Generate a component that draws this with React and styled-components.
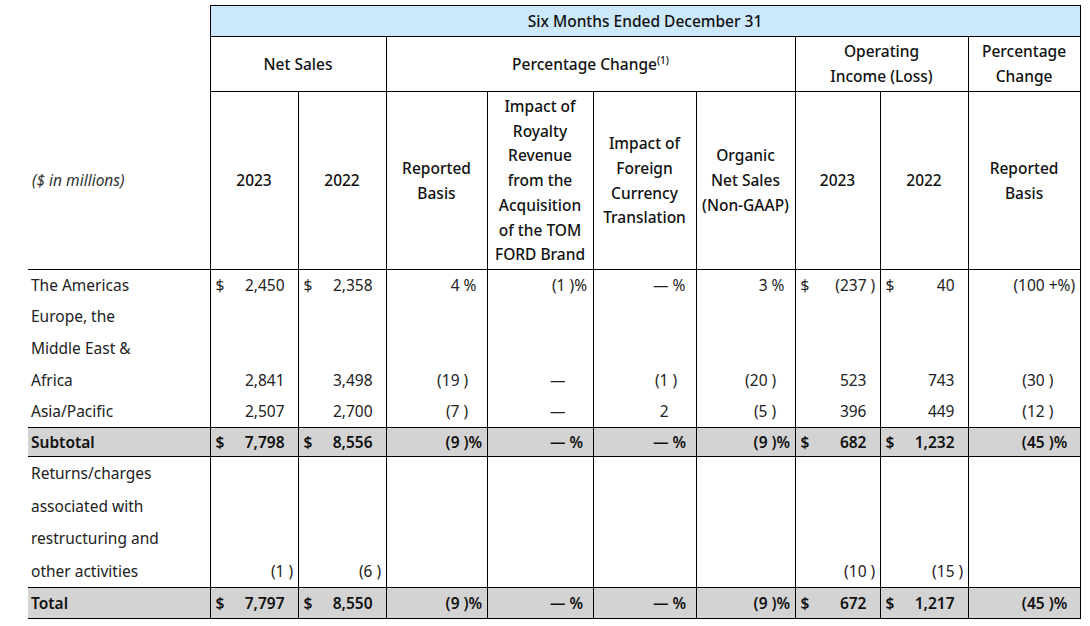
import React from 'react'
import styled, { createGlobalStyle } from 'styled-components'

const GlobalStyle = createGlobalStyle`
    html, body {
        margin: 0;
        padding: 0;
        background: #ffffff;
    }
    body {
        font-family: 'Noto Sans', 'Open Sans', sans-serif;
        font-size: 15.5px;
        color: #222222;
    }
`

const COLORS = {
    BLUE: '#cce8fb',
    GRAY: '#d3d3d3',
    LINE: '#000000',
}

const Page = styled.div`
    padding: 5px 0 0 28px;
`

const Table = styled.table`
    border-collapse: collapse;
    table-layout: fixed;
    width: 1052px;
`

const HeadRow = styled.tr`
    height: ${props => props.height}px;
`

const HeadCell = styled.th`
    border: 1px solid ${COLORS.LINE};
    padding: 0 4px;
    font-weight: 500;
    color: #111111;
    text-align: center;
    vertical-align: middle;
    line-height: 24.7px;
    background: ${props => (props.blue ? COLORS.BLUE : 'transparent')};
`

const BlankCell = styled.th`
    border: none;
    padding: 0;
`

const UnitsCell = styled.th`
    border: none;
    border-bottom: 1px solid ${COLORS.LINE};
    padding: 0 0 0 4px;
    text-align: left;
    font-weight: 400;
    font-style: italic;
    color: #333333;
    vertical-align: middle;
`

const Sup = styled.sup`
    font-size: 10px;
    line-height: 0;
    vertical-align: 6px;
`

const BodyRow = styled.tr`
    line-height: ${props => props.lh}px;
    background: ${props => (props.total ? COLORS.GRAY : 'transparent')};
    font-weight: ${props => (props.total ? 600 : 400)};
    color: ${props => (props.total ? '#111111' : '#222222')};
    border-top: ${props => (props.total ? `1px solid ${COLORS.LINE}` : 'none')};
    border-bottom: ${props => (props.total ? `1px solid ${COLORS.LINE}` : 'none')};
`

const LabelCell = styled.td`
    padding: 0 0 0 3px;
    vertical-align: bottom;
    white-space: nowrap;
`

const NumCell = styled.td`
    border-left: 1px solid ${COLORS.LINE};
    border-right: 1px solid ${COLORS.LINE};
    padding: 0;
    vertical-align: bottom;
`

const NumInner = styled.div`
    display: flex;
    align-items: baseline;
    white-space: pre;
`

const Dollar = styled.span`
    padding-left: 5px;
`

const Value = styled.span`
    flex: 1;
    text-align: right;
`

const Suffix = styled.span`
    width: ${props => props.w}px;
    flex-shrink: 0;
    text-align: left;
`

// suffix room at the right of each number column
const SUFFIX = [13, 13, 27, 27, 27, 27, 13, 13, 35]

const c = (v, s = '', d = '') => ({ v, s, d })
const D = v => c(v, '', '$')
const P = v => c(v, ' )')
const PCT = v => c(v, ' %')
const PP = v => c(v, ' )%')

const rows = [
    {
        label: ['The Americas'],
        lh: 30,
        cells: [D('2,450'), D('2,358'), PCT('4'), PP('(1'), PCT('—'), PCT('3'), c('(237', ' )', '$'), D('40'), c('(100', ' +%)')],
    },
    {
        label: ['Europe, the', 'Middle East &', 'Africa'],
        lh: 32,
        cells: [c('2,841'), c('3,498'), P('(19'), c('—'), P('(1'), P('(20'), c('523'), c('743'), P('(30')],
    },
    {
        label: ['Asia/Pacific'],
        lh: 31,
        cells: [c('2,507'), c('2,700'), P('(7'), c('—'), c('2'), P('(5'), c('396'), c('449'), P('(12')],
    },
    {
        label: ['Subtotal'],
        lh: 28,
        total: true,
        cells: [D('7,798'), D('8,556'), PP('(9'), PCT('—'), PCT('—'), PP('(9'), D('682'), D('1,232'), PP('(45')],
    },
    {
        label: ['Returns/charges', 'associated with', 'restructuring and', 'other activities'],
        lh: 32.6,
        cells: [P('(1'), P('(6'), c(''), c(''), c(''), c(''), P('(10'), P('(15'), c('')],
    },
    {
        label: ['Total'],
        lh: 30,
        total: true,
        cells: [D('7,797'), D('8,550'), PP('(9'), PCT('—'), PCT('—'), PP('(9'), D('672'), D('1,217'), PP('(45')],
    },
]

const widths = [182, 88, 88, 101, 106, 103, 99, 85, 88, 112]

const Lines = ({ items }) =>
    items.map((t, i) => (
        <React.Fragment key={i}>
            {i > 0 && <br />}
            {t}
        </React.Fragment>
    ))

const App = () => (
    <Page>
        <GlobalStyle />
        <Table>
            <colgroup>
                {widths.map((w, i) => (
                    <col key={i} style={{ width: w }} />
                ))}
            </colgroup>
            <thead>
                <HeadRow height={31}>
                    <BlankCell />
                    <HeadCell blue colSpan={9}>
                        Six Months Ended December 31
                    </HeadCell>
                </HeadRow>
                <HeadRow height={55}>
                    <BlankCell />
                    <HeadCell colSpan={2}>Net Sales</HeadCell>
                    <HeadCell colSpan={4}>
                        Percentage Change<Sup>(1)</Sup>
                    </HeadCell>
                    <HeadCell colSpan={2}>
                        <Lines items={['Operating', 'Income (Loss)']} />
                    </HeadCell>
                    <HeadCell>
                        <Lines items={['Percentage', 'Change']} />
                    </HeadCell>
                </HeadRow>
                <HeadRow height={178}>
                    <UnitsCell>($ in millions)</UnitsCell>
                    <HeadCell>2023</HeadCell>
                    <HeadCell>2022</HeadCell>
                    <HeadCell>
                        <Lines items={['Reported', 'Basis']} />
                    </HeadCell>
                    <HeadCell>
                        <Lines items={['Impact of', 'Royalty', 'Revenue', 'from the', 'Acquisition', 'of the TOM', 'FORD Brand']} />
                    </HeadCell>
                    <HeadCell>
                        <Lines items={['Impact of', 'Foreign', 'Currency', 'Translation']} />
                    </HeadCell>
                    <HeadCell>
                        <Lines items={['Organic', 'Net Sales', '(Non-GAAP)']} />
                    </HeadCell>
                    <HeadCell>2023</HeadCell>
                    <HeadCell>2022</HeadCell>
                    <HeadCell>
                        <Lines items={['Reported', 'Basis']} />
                    </HeadCell>
                </HeadRow>
            </thead>
            <tbody>
                {rows.map((row, r) => (
                    <BodyRow key={r} lh={row.lh} total={row.total ? 1 : 0}>
                        <LabelCell>
                            <Lines items={row.label} />
                        </LabelCell>
                        {row.cells.map((cell, i) => (
                            <NumCell key={i}>
                                <NumInner>
                                    {cell.d && <Dollar>{cell.d}</Dollar>}
                                    <Value>{cell.v}</Value>
                                    <Suffix w={SUFFIX[i]}>{cell.s}</Suffix>
                                </NumInner>
                            </NumCell>
                        ))}
                    </BodyRow>
                ))}
            </tbody>
        </Table>
    </Page>
)

export default App
